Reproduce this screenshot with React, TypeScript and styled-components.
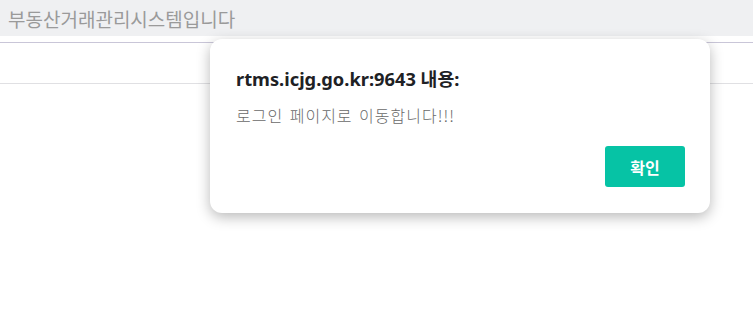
import React from "react";
import styled, { createGlobalStyle } from "styled-components";

const Global = createGlobalStyle`
  html, body { margin: 0; padding: 0; background: #ffffff; }
  body { font-family: "Noto Sans", "Noto Sans CJK KR", sans-serif; }
`;

const Page = styled.div`
  position: relative;
  width: 753px;
  height: 321px;
  overflow: hidden;
  background: #ffffff;
`;

const TopBar = styled.div`
  height: 36px;
  background: #eff0f2;
  display: flex;
  align-items: center;
  padding-left: 8px;
  color: #9a9a9a;
  font-family: "Noto Sans CJK KR", sans-serif;
  font-size: 19px;
`;

const NavBar = styled.div`
  margin-top: 6px;
  height: 40px;
  border-top: 1px solid #c9c6d8;
  border-bottom: 1px solid #e0e0e3;
`;

const Dialog = styled.div`
  position: absolute;
  left: 210px;
  top: 39px;
  width: 500px;
  height: 174px;
  box-sizing: border-box;
  background: #ffffff;
  border-radius: 12px;
  box-shadow: 0 4px 14px rgba(0, 0, 0, 0.28);
  padding: 26px 25px 0 26px;
  display: flex;
  flex-direction: column;
`;

const Title = styled.div`
  font-family: "Noto Sans", "Noto Sans CJK KR", sans-serif;
  font-weight: 700;
  font-size: 18.3px;
  color: #202124;
  line-height: 28px;
`;

const Message = styled.div`
  margin-top: 11px;
  font-family: "Noto Sans CJK KR", sans-serif;
  font-weight: 300;
  font-size: 16px;
  letter-spacing: 1px;
  word-spacing: 2px;
  color: #6a6a6a;
  line-height: 22px;
`;

const Actions = styled.div`
  margin-top: 20px;
  display: flex;
  justify-content: flex-end;
`;

const OkButton = styled.button`
  width: 80px;
  height: 41px;
  border: none;
  border-radius: 3px;
  background: #06c3a5;
  color: #ffffff;
  font-family: "Noto Sans CJK KR", sans-serif;
  font-weight: 700;
  font-size: 16px;
  cursor: pointer;
`;

export default function App() {
  return (
    <Page>
      <Global />
      <TopBar>부동산거래관리시스템입니다</TopBar>
      <NavBar />
      <Dialog>
        <Title>rtms.icjg.go.kr:9643 내용:</Title>
        <Message>로그인 페이지로 이동합니다!!!</Message>
        <Actions>
          <OkButton>확인</OkButton>
        </Actions>
      </Dialog>
    </Page>
  );
}
